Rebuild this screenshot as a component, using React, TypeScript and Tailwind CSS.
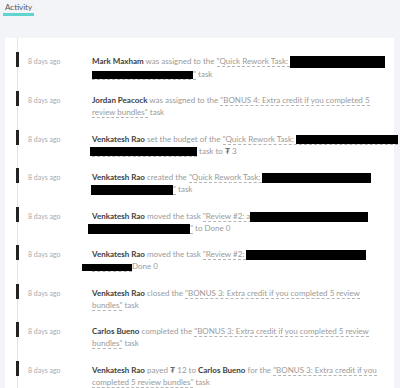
import React from "react";

const Box = ({ w, h = 10, ml = 0 }: { w: number; h?: number; ml?: number }) => (
  <span
    className="inline-block bg-black align-middle"
    style={{ width: w, height: h, marginLeft: ml }}
  />
);

const Name = ({ children }: { children: React.ReactNode }) => (
  <span className="font-bold text-[#3d3d3d]">{children}</span>
);

const Link = ({ children }: { children: React.ReactNode }) => (
  <span className="border-b border-dashed border-[#b5b5b5] text-[#9a9a9a]">{children}</span>
);

const Tug = () => <span className="text-[#555]">₮</span>;

const items: React.ReactNode[] = [
  <>
    <Name>Mark Maxham</Name> was assigned to the{" "}
    <Link>
      "Quick Rework Task: <Box w={95} h={12} />
      <br />
      <Box w={101} h={8} />"
    </Link>{" "}
    task
  </>,
  <>
    <Name>Jordan Peacock</Name> was assigned to the{" "}
    <Link>
      "BONUS 4: Extra credit if you completed 5
      <br />
      review bundles"
    </Link>{" "}
    task
  </>,
  <>
    <Name>Venkatesh Rao</Name> set the budget of the{" "}
    <Link>
      "Quick Rework Task: <Box w={102} h={9} />
      <br />
      <Box w={107} h={9} ml={-2} />
    </Link>{" "}
    task to <Tug /> 3
  </>,
  <>
    <Name>Venkatesh Rao</Name> created the{" "}
    <Link>
      "Quick Rework Task: <Box w={109} />
      <br />
      <Box w={82} ml={-1} />"
    </Link>{" "}
    task
  </>,
  <>
    <Name>Venkatesh Rao</Name> moved the task{" "}
    <Link>
      "Review #2: a<Box w={118} />
      <br />
      <Box w={102} ml={-4} />"
    </Link>{" "}
    to Done 0
  </>,
  <>
    <Name>Venkatesh Rao</Name> moved the task{" "}
    <Link>
      "Review #2: <Box w={120} />
      <br />
      <Box w={50} h={7} ml={-10} />
    </Link>
    Done 0
  </>,
  <>
    <Name>Venkatesh Rao</Name> closed the{" "}
    <Link>
      "BONUS 3: Extra credit if you completed 5 review
      <br />
      bundles"
    </Link>{" "}
    task
  </>,
  <>
    <Name>Carlos Bueno</Name> completed the{" "}
    <Link>
      "BONUS 3: Extra credit if you completed 5 review
      <br />
      bundles"
    </Link>{" "}
    task
  </>,
  <>
    <Name>Venkatesh Rao</Name> payed <Tug /> 12 to <Name>Carlos Bueno</Name> for the{" "}
    <Link>
      "BONUS 3: Extra credit if you
      <br />
      completed 5 review bundles"
    </Link>{" "}
    task
  </>,
];

export default function App() {
  return (
    <div
      className="h-[388px] w-[400px] overflow-hidden bg-[#f3f4f8] pl-[3px]"
      style={{ fontFamily: "Lato, 'Open Sans', sans-serif" }}
    >
      <div className="w-fit border-b-[3px] border-[#5fd4cf] px-[2px] pt-[1px] text-[8px] leading-[12px] text-[#555]">
        Activity
      </div>
      <div className="mt-[22px] ml-[2px] h-[400px] w-[389px] bg-white pl-[12px]">
        <div className="flex h-full flex-col gap-[14.5px] border-l border-[#e4e4e4] pt-[17px]">
          {items.map((content, i) => (
            <div key={i} className="flex items-start">
              <div className="-ml-[2px] -mt-[3px] h-[15px] w-[3px] shrink-0 bg-[#222]" />
              <div className="ml-[9px] w-[64px] shrink-0 text-[7px] leading-[12px] text-[#aaa]">
                8 days ago
              </div>
              <div className="whitespace-nowrap text-[8px] leading-[12px] text-[#9a9a9a]">
                {content}
              </div>
            </div>
          ))}
        </div>
      </div>
    </div>
  );
}
